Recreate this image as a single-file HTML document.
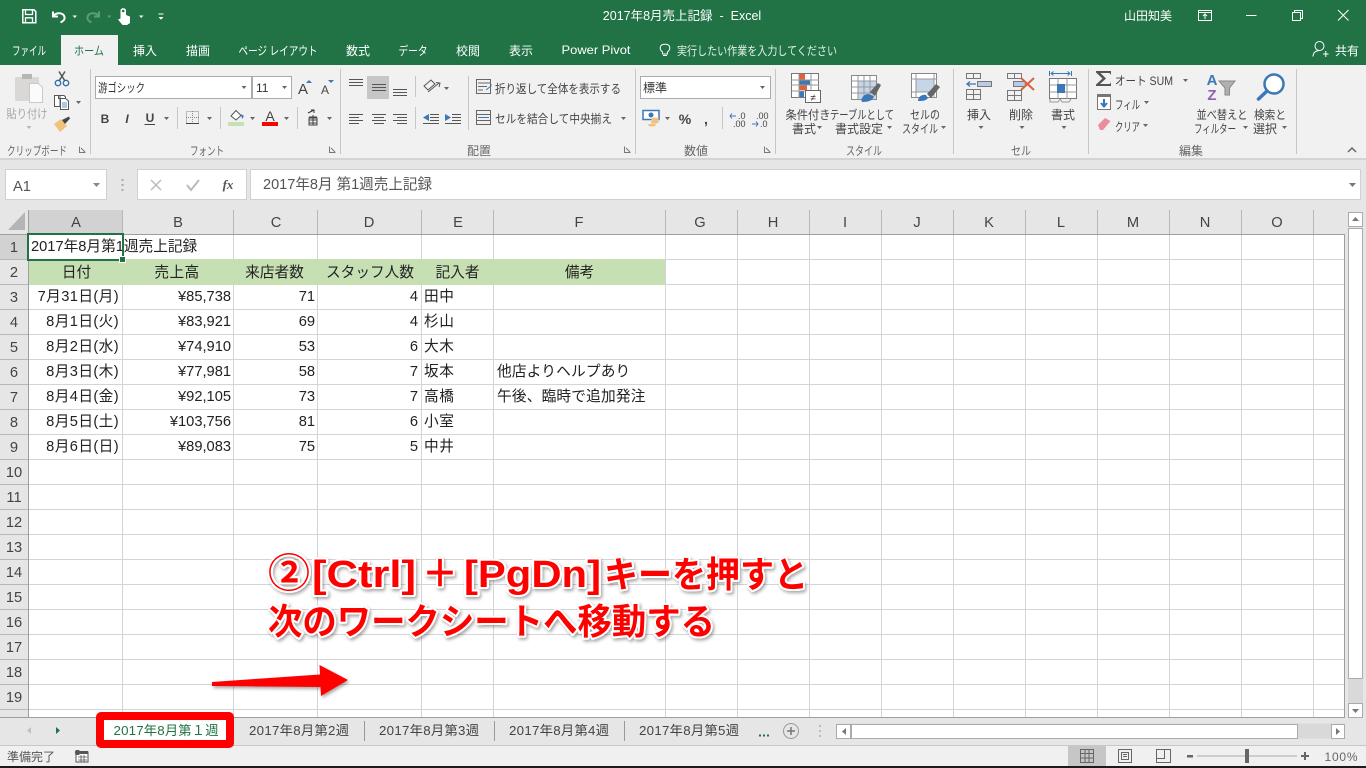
<!DOCTYPE html>
<html lang="ja"><head><meta charset="utf-8"><title>Excel</title>
<style>
html,body{margin:0;padding:0;width:1366px;height:768px;overflow:hidden;background:#fff}
#a{position:relative;width:1366px;height:768px;overflow:hidden;font-family:"Liberation Sans","Noto Sans CJK JP",sans-serif}
svg{position:absolute;left:0;top:0}
.c{position:absolute;height:25px;line-height:24px;font-size:14.67px;color:#222;white-space:nowrap}
.r{text-align:right}.m{text-align:center}
.A{left:28px;width:91px}.B{left:123px;width:108px}.C{left:234px;width:81px}.D{left:318px;width:100px}.E{left:424px;width:68px;letter-spacing:.6px}.F{left:497px;width:168px}
.k{letter-spacing:.4px}
.t{font-family:"Liberation Sans","Noto Sans CJK JP",sans-serif;font-size:12px;fill:#444}
.w{fill:#fff}
.h{font-size:14.67px;fill:#444;text-anchor:middle}
.g{font-size:12px;fill:#666;text-anchor:middle}
.s{font-size:13.3px;fill:#444;text-anchor:middle}
.x{text-anchor:middle}
.ann{font-family:"Liberation Sans","Noto Sans CJK JP",sans-serif;font-weight:700;fill:#f00;stroke:#fff;stroke-width:4px;paint-order:stroke fill;stroke-linejoin:round}
</style></head><body><div id="a">
<svg width="1366" height="768" viewBox="0 0 1366 768">
<defs><filter id="sh" x="-5%" y="-20%" width="110%" height="150%"><feDropShadow dx="1.5" dy="2" stdDeviation="1.5" flood-color="#000" flood-opacity=".35"/></filter></defs>
<!-- base -->
<rect width="1366" height="65" fill="#217346"/>
<rect y="65" width="1366" height="93" fill="#f1f1f1"/>
<rect y="158" width="1366" height="2" fill="#d4d4d4"/>
<rect y="160" width="1366" height="558" fill="#e6e6e6"/>
<rect x="28" y="235" width="1316.5" height="482" fill="#fff"/>
<!-- header highlight -->
<rect x="28" y="210" width="94.5" height="24" fill="#d2d2d2"/>
<rect x="0" y="235" width="28" height="24" fill="#d2d2d2"/>
<path d="M25 212V230H8Z" fill="#b5b5b5"/>
<!-- gridlines -->
<g stroke="#d4d4d4" fill="none">
<path d="M28 284.500H1344.500M28 309.500H1344.500M28 334.500H1344.500M28 359.500H1344.500M28 384.500H1344.500M28 409.500H1344.500M28 434.500H1344.500M28 459.500H1344.500M28 484.500H1344.500M28 509.500H1344.500M28 534.500H1344.500M28 559.500H1344.500M28 584.500H1344.500M28 609.500H1344.500M28 634.500H1344.500M28 659.500H1344.500M28 684.500H1344.500M28 709.500H1344.500M122 259.500H1344.500"/>
<path d="M122.500 235V717M233.500 235V717M317.500 235V717M421.500 235V717M493.500 235V717M665.500 235V717M737.500 235V717M809.500 235V717M881.500 235V717M953.500 235V717M1025.500 235V717M1097.500 235V717M1169.500 235V717M1241.500 235V717M1313.500 235V717"/>
</g>
<rect x="29" y="259" width="636" height="26" fill="#c6e0b4"/>
<!-- row header lines -->
<g stroke="#b8b8b8" fill="none">
<path d="M0 259.500H28M0 284.500H28M0 309.500H28M0 334.500H28M0 359.500H28M0 384.500H28M0 409.500H28M0 434.500H28M0 459.500H28M0 484.500H28M0 509.500H28M0 534.500H28M0 559.500H28M0 584.500H28M0 609.500H28M0 634.500H28M0 659.500H28M0 684.500H28M0 709.500H28"/>
<path d="M122.500 210V234M233.500 210V234M317.500 210V234M421.500 210V234M493.500 210V234M665.500 210V234M737.500 210V234M809.500 210V234M881.500 210V234M953.500 210V234M1025.500 210V234M1097.500 210V234M1169.500 210V234M1241.500 210V234M1313.500 210V234"/>
</g>
<path d="M0 234.500H1344.500M28.500 210V717M1344.500 234V717M0 717.500H1345" stroke="#9e9e9e" fill="none"/>
<!-- header text -->
<text class="h" x="76" y="227">A</text><text class="h" x="178" y="227">B</text><text class="h" x="276" y="227">C</text><text class="h" x="369" y="227">D</text><text class="h" x="458" y="227">E</text><text class="h" x="579" y="227">F</text><text class="h" x="700" y="227">G</text><text class="h" x="773" y="227">H</text><text class="h" x="845" y="227">I</text><text class="h" x="917" y="227">J</text><text class="h" x="989" y="227">K</text><text class="h" x="1061" y="227">L</text><text class="h" x="1133" y="227">M</text><text class="h" x="1205" y="227">N</text><text class="h" x="1277" y="227">O</text>
<text class="h" x="14" y="252">1</text><text class="h" x="14" y="277">2</text><text class="h" x="14" y="302">3</text><text class="h" x="14" y="327">4</text><text class="h" x="14" y="352">5</text><text class="h" x="14" y="377">6</text><text class="h" x="14" y="402">7</text><text class="h" x="14" y="427">8</text><text class="h" x="14" y="452">9</text><text class="h" x="14" y="477">10</text><text class="h" x="14" y="502">11</text><text class="h" x="14" y="527">12</text><text class="h" x="14" y="552">13</text><text class="h" x="14" y="577">14</text><text class="h" x="14" y="602">15</text><text class="h" x="14" y="627">16</text><text class="h" x="14" y="652">17</text><text class="h" x="14" y="677">18</text><text class="h" x="14" y="702">19</text>
<rect x="0" y="710" width="28" height="7" fill="#e6e6e6"/>

<!-- vertical scrollbar -->
<rect x="1348" y="229" width="15" height="474" fill="#d9d9d9"/>
<rect x="1348.500" y="212.500" width="14" height="14" fill="#fff" stroke="#ababab"/>
<path d="M1352 221H1359L1355.500 217Z" fill="#777"/>
<rect x="1348.500" y="228.500" width="14" height="450" fill="#fff" stroke="#ababab"/>
<rect x="1348.500" y="703.500" width="14" height="14" fill="#fff" stroke="#ababab"/>
<path d="M1352 709H1359L1355.500 713Z" fill="#777"/>

<!-- Title bar -->
<g fill="none" stroke="#fff" stroke-width="1.500">
<path d="M22.800 9.800H34L35.800 11.600V22.800H22.800Z"/>
<path d="M25.500 10V14.500H32.500V10" stroke-width="1.300"/>
<path d="M25.500 23V17.800H32.500V23" stroke-width="1.300"/>
<path d="M53 11.500V16.500H58" stroke-width="2"/>
<path d="M53.500 16C56 11.800 63.500 12.500 64.500 17C65 19.500 63 21.500 60.500 22.300" stroke-width="2"/>
</g>
<path d="M72.500 15.500H77L74.750 18Z" fill="#fff"/>
<g fill="none" stroke="#5d9c7b" stroke-width="2"><path d="M99 11.500V16.500H94"/><path d="M98.500 16C96 11.800 88.500 12.500 87.500 17C87 19.500 89 21.500 91.500 22.300"/></g>
<path d="M107 15.500H111.500L109.250 18Z" fill="#5d9c7b"/>
<path d="M120.500 10.500C120.500 7.500 126 7.500 126 10.500V15L130 16.500V23L127 25H122.500L118 19.500L120.500 18.500Z" fill="#fff"/>
<circle cx="123.200" cy="11" r="1.300" fill="#217346"/>
<path d="M139 15.500H143.500L141.250 18Z" fill="#fff"/>
<path d="M158.500 13.500H163.500V14.500H158.500ZM158.500 17H163.500L161 19.700Z" fill="#fff"/>
<text class="t w x" x="682" y="20" style="font-size:12.500px" xml:space="preserve">2017年8月売上記録  -  Excel</text>
<text class="t w x" x="1148" y="20" textLength="48" lengthAdjust="spacingAndGlyphs">山田知美</text>
<g fill="none" stroke="#fff" stroke-width="1">
<path d="M1198.500 10.500H1211.500V20.500H1198.500ZM1198.500 12.500H1211.500M1205 19V14.500M1203 16L1205 14L1207 16"/>
<path d="M1246 15.500H1256.500"/>
<path d="M1292.500 12.500H1300.500V20.500H1292.500ZM1294.500 12V10.500H1302.500V18.500H1301"/>
<path d="M1338 10L1348.500 20.500M1348.500 10L1338 20.500"/>
</g>
<!-- tabs -->
<rect x="61" y="35" width="57" height="31" fill="#f1f1f1"/>
<g style="font-size:12px">
<text class="t w x" x="29" y="55" textLength="34" lengthAdjust="spacingAndGlyphs">ファイル</text>
<text class="t x" x="89" y="55" textLength="30" lengthAdjust="spacingAndGlyphs" style="fill:#217346">ホーム</text>
<text class="t w x" x="145" y="55" textLength="24">挿入</text>
<text class="t w x" x="198" y="55" textLength="24">描画</text>
<text class="t w x" x="278" y="55" textLength="79" lengthAdjust="spacingAndGlyphs">ページ レイアウト</text>
<text class="t w x" x="358" y="55" textLength="24">数式</text>
<text class="t w x" x="413" y="55" textLength="29" lengthAdjust="spacingAndGlyphs">データ</text>
<text class="t w x" x="468" y="55" textLength="24">校閲</text>
<text class="t w x" x="521" y="55" textLength="24">表示</text>
<text class="t w x" x="596" y="54" textLength="69" lengthAdjust="spacingAndGlyphs">Power Pivot</text>
<text class="t" x="677" y="55" textLength="160" lengthAdjust="spacingAndGlyphs" style="fill:#e4efe9">実行したい作業を入力してください</text>
<text class="t w x" x="1347" y="55" textLength="24">共有</text>
</g>
<g fill="none" stroke="#fff" stroke-width="1">
<path d="M662.500 52C660.500 50.500 659.800 48.500 660.500 46.500C661.500 43.500 668.500 43.500 669.500 46.500C670.200 48.500 669.500 50.500 667.500 52V54H662.500ZM663 55.500H667"/>
<circle cx="1319.500" cy="46" r="4.500"/>
<path d="M1313 56.500C1313 52.500 1316 50.500 1319.500 50.500M1323 54H1328.500M1325.800 51V57"/>
</g>

<!-- ribbon separators -->
<path d="M90.500 69V154M340.500 69V154M635.500 69V154M775.500 69V154M953.500 69V154M1088.500 69V154M1296.500 69V154" stroke="#c6c6c6"/>
<path d="M415.500 76V97M415.500 107V129M468.500 76V130M177.500 107V129M220.500 107V129M297.500 107V129M722.500 107V129" stroke="#c6c6c6"/>

<!-- group labels -->
<g>
<text class="g" x="37" y="155" textLength="60" lengthAdjust="spacingAndGlyphs">クリップボード</text>
<text class="g" x="207" y="155" textLength="34" lengthAdjust="spacingAndGlyphs">フォント</text>
<text class="g" x="479" y="155" textLength="24">配置</text>
<text class="g" x="696" y="155" textLength="24">数値</text>
<text class="g" x="864" y="155" textLength="36" lengthAdjust="spacingAndGlyphs">スタイル</text>
<text class="g" x="1021" y="155" textLength="20" lengthAdjust="spacingAndGlyphs">セル</text>
<text class="g" x="1191" y="155" textLength="24">編集</text>
</g>
<g fill="none" stroke="#777" stroke-width="1">
<path d="M79.500 146.500V152.500H85.500M85 152L81 148"/><path d="M329.500 146.500V152.500H335.500M335 152L331 148"/><path d="M624.500 146.500V152.500H630.500M630 152L626 148"/><path d="M764.500 146.500V152.500H770.500M770 152L766 148"/>
</g>

<!-- clipboard -->
<rect x="15" y="77" width="24" height="24" rx="1" fill="#dad7d7"/>
<rect x="22" y="74" width="10" height="5" fill="#b9b5b5"/>
<path d="M29.500 83.500H38.500L42.500 87.500V102.500H29.500Z" fill="#fbfbfb" stroke="#c9c9c9"/>
<text class="t x" x="27" y="118" textLength="41" lengthAdjust="spacingAndGlyphs" style="fill:#a6a6a6">貼り付け</text>
<path d="M26.500 126H31.500L29 129Z" fill="#b5b5b5"/>
<g fill="none"><circle cx="58" cy="83" r="2.700" stroke="#2b6fb5" stroke-width="1.400"/><circle cx="66" cy="83" r="2.700" stroke="#2b6fb5" stroke-width="1.400"/><path d="M59 81L65 71.500M65 81L59 71.500" stroke="#555" stroke-width="1.500"/></g>
<path d="M58.500 95.500H64L65.500 97V98.500H58.500ZM54.500 95.500H60V106.500H54.500Z" fill="#fff" stroke="#555"/>
<path d="M60.500 98.500H65.500L68.500 101V109.500H60.500Z" fill="#fff" stroke="#555"/>
<path d="M62 103H67M62 105H67M62 107H67" stroke="#2b6fb5" stroke-width=".8"/>
<path d="M76 101H81L78.500 104Z" fill="#666"/>
<path d="M54 124L61 119L67 126L60 132Z" fill="#f2c27a"/>
<path d="M62 120L69 116.500L70 118.500L65 124Z" fill="#444"/>

<!-- font -->
<rect x="95.500" y="76.500" width="156" height="22" fill="#fff" stroke="#ababab"/>
<rect x="252.500" y="76.500" width="39" height="22" fill="#fff" stroke="#ababab"/>
<text class="t" x="98" y="92" textLength="47" lengthAdjust="spacingAndGlyphs" style="fill:#333">游ゴシック</text>
<text class="t" x="256" y="92" style="fill:#333">11</text>
<path d="M241.500 86H246.500L244 89ZM282 86H287L284.500 89Z" fill="#666"/>
<text class="t x" x="303" y="94" style="font-size:15px;fill:#444">A</text>
<path d="M306 83H312L309 80Z" fill="#3c78b5"/>
<text class="t x" x="325" y="94" style="font-size:12px;fill:#444">A</text>
<path d="M328 80H334L331 83Z" fill="#3c78b5"/>
<text class="t x" x="105" y="123" style="font-size:12px;font-weight:700;fill:#444">B</text>
<text class="t x" x="127" y="123" style="font-size:12px;font-weight:700;font-style:italic;fill:#444">I</text>
<text class="t x" x="150" y="122" style="font-size:12px;font-weight:700;fill:#444">U</text>
<path d="M144.500 124.500H155" stroke="#444"/>
<path d="M164 117H169L166.500 120ZM207 117H212L209.500 120ZM250 117H255L252.500 120ZM284 117H289L286.500 120ZM327 117H332L329.500 120Z" fill="#666"/>
<rect x="186.500" y="111.500" width="12" height="12" fill="none" stroke="#888" stroke-dasharray="1 1"/>
<path d="M192.500 111V124M186 117.500H199" stroke="#888" stroke-dasharray="1 1"/>
<path d="M186 123.500H199" stroke="#444"/>
<rect x="228" y="122" width="16" height="4" fill="#c6e0b4"/>
<path d="M231 116L236 110.500L241 115.500L236 120Z" fill="#fff" stroke="#555"/>
<path d="M241 114L244 116L242 119Z" fill="#3c78b5"/>
<text class="t x" x="270" y="121" style="font-size:14px;fill:#444">A</text>
<rect x="262" y="122" width="16" height="4" fill="#f00"/>
<path d="M308 113L314 110M311 110H314V113" stroke="#333" fill="none"/>
<path d="M309 117H317M309 120H317M309 123H317M313 115V125" stroke="#444" fill="none"/>
<rect x="309" y="118" width="8" height="7" fill="none" stroke="#444"/>

<!-- alignment -->
<rect x="367" y="76" width="22" height="23" fill="#c6c6c6"/>
<g stroke="#555" fill="none">
<path d="M349 79.500H363M349 82.500H363M349 85.500H363"/>
<path d="M372 84.500H386M372 87.500H386M372 90.500H386"/>
<path d="M393 89.500H407M393 92.500H407M393 95.500H407"/>
<path d="M349 114.500H363M349 117.500H359M349 120.500H363M349 123.500H359"/>
<path d="M372 114.500H386M374 117.500H384M372 120.500H386M374 123.500H384"/>
<path d="M393 114.500H407M397 117.500H407M393 120.500H407M397 123.500H407"/>
<path d="M430 114.500H439M430 117.500H439M430 120.500H439M423 123.500H439M423 114.500"/>
<path d="M452 114.500H461M452 117.500H461M452 120.500H461M445 123.500H461"/>
</g>
<path d="M423 117.500L429 114V116H429V119H429V121Z" fill="#3c78b5"/>
<path d="M451 117.500L445 114V121Z" fill="#3c78b5"/>
<g fill="none" stroke="#555"><path d="M424 86L431 80L435 84L428 90Z"/><path d="M428 92L439 83M436 82.500L440 83L439 87"/></g>
<path d="M444 87H449L446.500 90Z" fill="#666"/>
<g fill="none" stroke="#666"><rect x="476.500" y="79.500" width="14" height="14"/><path d="M478 83H490M478 86.500H487M478 90H483"/></g>
<path d="M486 90L491 86V84" fill="none" stroke="#3c78b5"/>
<text class="t" x="495" y="93" textLength="126" lengthAdjust="spacingAndGlyphs">折り返して全体を表示する</text>
<g fill="none" stroke="#666"><rect x="476.500" y="110.500" width="14" height="14"/><path d="M477 114.500H490M477 120.500H490"/></g>
<path d="M478 117.500H489" stroke="#3c78b5"/>
<text class="t" x="495" y="123" textLength="117" lengthAdjust="spacingAndGlyphs">セルを結合して中央揃え</text>
<path d="M621 117H626L623.500 120Z" fill="#666"/>

<!-- number -->
<rect x="640.500" y="76.500" width="130" height="22" fill="#fff" stroke="#ababab"/>
<text class="t" x="643" y="92" textLength="24" style="fill:#333">標準</text>
<path d="M760 86H765L762.500 89Z" fill="#666"/>
<rect x="643" y="110.500" width="16" height="9" fill="#fff" stroke="#3c78b5" stroke-width="1.500"/>
<circle cx="651" cy="115" r="2.500" fill="#3c78b5"/>
<ellipse cx="655" cy="119" rx="4" ry="1.500" fill="#f2c27a"/><ellipse cx="655" cy="122" rx="4" ry="1.500" fill="#f2c27a"/><ellipse cx="652" cy="125" rx="4" ry="1.500" fill="#f2c27a"/>
<path d="M665 117H670L667.500 120Z" fill="#666"/>
<text class="t x" x="685" y="124" style="font-size:14px;font-weight:700;fill:#444">%</text>
<text class="t x" x="706" y="124" style="font-size:14px;font-weight:700;fill:#444">,</text>
<text class="t" x="738" y="119" style="font-size:9px;fill:#444">.0</text>
<text class="t" x="733" y="127" style="font-size:9px;fill:#444">.00</text>
<path d="M730 116H736M732 113.500L730 116L732 118.500" stroke="#3c78b5" fill="none"/>
<text class="t" x="756" y="119" style="font-size:9px;fill:#444">.00</text>
<text class="t" x="760" y="127" style="font-size:9px;fill:#444">.0</text>
<path d="M752 124H758M756 121.500L758 124L756 126.500" stroke="#3c78b5" fill="none"/>

<!-- styles -->
<rect x="791.500" y="73.500" width="27" height="24" fill="#fff" stroke="#777"/>
<rect x="799" y="74" width="6" height="6" fill="#e0623c"/><rect x="799" y="80" width="11" height="5" fill="#3c78b5"/><rect x="799" y="85" width="8" height="5" fill="#e0623c"/><rect x="799" y="91" width="5" height="6" fill="#3c78b5"/>
<path d="M791.500 80H819M791.500 85H819M791.500 91H819M799 74V98M811 74V98" stroke="#999" fill="none"/>
<rect x="805.500" y="90.500" width="15" height="12" fill="#fff" stroke="#666"/>
<text class="t x" x="813" y="101" style="font-size:10px;fill:#333">≠</text>
<text class="t x" x="808" y="119" textLength="45" lengthAdjust="spacingAndGlyphs">条件付き</text>
<text class="t x" x="804" y="133" textLength="24">書式</text>
<path d="M817 126H822L819.500 129Z" fill="#666"/>
<rect x="851.500" y="75.500" width="25" height="24" fill="#fff" stroke="#888"/>
<rect x="858" y="81" width="18" height="18" fill="#c5d6e8"/>
<path d="M851.500 81H877M851.500 87H877M851.500 93H877M858 76V100M864 76V100M870 76V100" stroke="#999" fill="none"/>
<path d="M862 102C860 99 864 94 868 94L874 96C873 100 870 102 862 102Z" fill="#3c78b5"/>
<path d="M870 92L878 83L881 85L875 96Z" fill="#666"/>
<text class="t x" x="862" y="119" textLength="64" lengthAdjust="spacingAndGlyphs">テーブルとして</text>
<text class="t x" x="859" y="133" textLength="48">書式設定</text>
<path d="M887 126H892L889.500 129Z" fill="#666"/>
<rect x="911.500" y="73.500" width="25" height="24" fill="#fff" stroke="#888"/>
<rect x="916" y="79" width="18" height="13" fill="#c5d6e8"/>
<path d="M911.500 79H937M911.500 92H937M916 74V98M934 74V98" stroke="#999" fill="none"/>
<path d="M918 101C918 97 922 94 926 95L928 98C926 101 922 101 918 101Z" fill="#3c78b5"/>
<path d="M927 94L936 84L940 87L931 98Z" fill="#666"/>
<text class="t x" x="925" y="119" textLength="30" lengthAdjust="spacingAndGlyphs">セルの</text>
<text class="t x" x="920" y="133" textLength="36" lengthAdjust="spacingAndGlyphs">スタイル</text>
<path d="M941 126H946L943.500 129Z" fill="#666"/>

<!-- cells -->
<g fill="none" stroke="#777">
<path d="M966.500 73.500H980.500V78.500H966.500ZM973.500 73.500V78.500"/>
<path d="M966.500 89.500H980.500V99.500H966.500ZM966.500 94.500H980.500M973.500 89.500V99.500"/>
<path d="M977.500 81.500H991.500V86.500H977.500ZM984.500 81.500V86.500"/>
<path d="M1007.500 73.500H1021.500V78.500H1007.500ZM1014.500 73.500V78.500"/>
<path d="M1007.500 90.500H1021.500V100.500H1007.500ZM1007.500 95.500H1021.500M1014.500 90.500V100.500"/>
<path d="M1013.500 81.500H1025V86.500H1013.500Z"/>
</g>
<rect x="978" y="82" width="13" height="4" fill="#b8cce4"/><rect x="1014" y="82" width="10" height="4" fill="#b8cce4"/>
<path d="M967 84H976M970 81.500L967 84L970 86.500" stroke="#3c78b5" stroke-width="1.300" fill="none"/>
<path d="M1021 78L1034 90M1034 78L1021 90" stroke="#d9603b" stroke-width="2"/>
<path d="M1049.500 71V76M1071.500 71V76M1051 73.500H1070M1053.500 71.500L1051 73.500L1053.500 75.500M1067.500 71.500L1070 73.500L1067.500 75.500" stroke="#3c78b5" fill="none"/>
<rect x="1049.500" y="78.500" width="27" height="20" fill="#fff" stroke="#777"/>
<path d="M1049.500 85H1077M1049.500 92H1077M1058 78.500V99M1067 78.500V99" stroke="#999" fill="none"/>
<rect x="1057" y="84" width="8" height="9" fill="#3c78b5"/>
<path d="M1050 99V102L1058 102L1060 99M1060 99L1062 102H1069L1071 99" stroke="#999" fill="none"/>
<text class="t x" x="979" y="119" textLength="24">挿入</text>
<text class="t x" x="1021" y="119" textLength="24">削除</text>
<text class="t x" x="1063" y="119" textLength="24">書式</text>
<path d="M978.500 126H983.500L981 129ZM1019.500 126H1024.500L1022 129ZM1061.500 126H1066.500L1064 129Z" fill="#666"/>

<!-- editing -->
<path d="M1096 71H1111V75L1109.500 73H1100.500L1106 78.500L1100 84H1110L1111 82V86H1096V84.500L1102.500 78.500L1096 72.500Z" fill="#555"/>
<text class="t" x="1115" y="85" textLength="58" lengthAdjust="spacingAndGlyphs">オート SUM</text>
<path d="M1183 79H1188L1185.500 82ZM1144 101H1149L1146.500 104ZM1143 124H1148L1145.500 127ZM1243 126H1248L1245.500 129ZM1282 126H1287L1284.500 129Z" fill="#666"/>
<rect x="1097.500" y="94.500" width="13" height="15" fill="#fff" stroke="#777"/>
<rect x="1097" y="94" width="14" height="3" fill="#777"/>
<path d="M1104 99V106M1101 103L1104 106.500L1107 103" stroke="#3c78b5" stroke-width="2" fill="none"/>
<text class="t" x="1115" y="109" textLength="25" lengthAdjust="spacingAndGlyphs">フィル</text>
<path d="M1098 125L1105 118L1110.500 121L1103 130H1100Z" fill="#ec8d9d"/>
<text class="t" x="1115" y="131" textLength="25" lengthAdjust="spacingAndGlyphs">クリア</text>
<text class="t x" x="1212" y="85" style="font-size:15px;font-weight:700;fill:#3c78b5">A</text>
<text class="t x" x="1212" y="100" style="font-size:15px;font-weight:700;fill:#9060b0">Z</text>
<path d="M1219 81H1235L1229.500 88V95L1225 95V88Z" fill="#b0b0b0" stroke="#888"/>
<text class="t x" x="1222" y="119" textLength="51" lengthAdjust="spacingAndGlyphs">並べ替えと</text>
<text class="t x" x="1215" y="133" textLength="42" lengthAdjust="spacingAndGlyphs">フィルター</text>
<circle cx="1274" cy="84" r="9.500" fill="#fff" stroke="#3c78b5" stroke-width="2.500"/>
<path d="M1267 91L1258.500 99" stroke="#3c78b5" stroke-width="3.500" stroke-linecap="round"/>
<text class="t x" x="1270" y="119" textLength="32" lengthAdjust="spacingAndGlyphs">検索と</text>
<text class="t x" x="1265" y="133" textLength="24">選択</text>
<path d="M1348 152L1352 148L1356 152" stroke="#666" stroke-width="1.500" fill="none"/>

<!-- formula bar -->
<rect x="5.500" y="169.500" width="101" height="30" fill="#fff" stroke="#d0d0d0"/>
<text class="t" x="13" y="191" style="font-size:14.670px;fill:#555">A1</text>
<path d="M93 183H100L96.500 187Z" fill="#888"/>
<path d="M122.500 179V181M122.500 184V186M122.500 189V191" stroke="#aaa" stroke-width="2"/>
<rect x="137.500" y="169.500" width="109" height="30" fill="#fff" stroke="#d0d0d0"/>
<rect x="250.500" y="169.500" width="1110" height="30" fill="#fff" stroke="#d0d0d0"/>
<path d="M151 180L161 190M161 180L151 190" stroke="#bbb" stroke-width="1.500"/>
<path d="M187 185L191 190L199 180" stroke="#bbb" stroke-width="2" fill="none"/>
<text x="228" y="189" class="x" style="font-family:'Liberation Serif',serif;font-size:13px;font-style:italic;font-weight:700;fill:#555">fx</text>
<text class="t" x="263" y="189" textLength="169" lengthAdjust="spacingAndGlyphs" style="font-size:14.670px;fill:#555">2017年8月 第1週売上記録</text>
<path d="M1349 183H1356L1352.500 187Z" fill="#777"/>

<!-- sheet tabs -->
<rect x="0" y="718" width="1366" height="27" fill="#e6e6e6"/>
<rect x="0" y="745" width="1366" height="1" fill="#c8c8c8"/>
<rect x="0" y="746" width="1366" height="20" fill="#f0f0f0"/>
<rect x="0" y="766" width="1366" height="2" fill="#1b1b1b"/>
<rect x="1068" y="746" width="38" height="20" fill="#c6c6c6"/>
<path d="M31 727V734L27 730.500Z" fill="#c0c0c0"/>
<path d="M56 727V734L60 730.500Z" fill="#217346"/>
<text class="s" x="299" y="735" textLength="100">2017年8月第2週</text>
<text class="s" x="429" y="735" textLength="100">2017年8月第3週</text>
<text class="s" x="559" y="735" textLength="100">2017年8月第4週</text>
<text class="s" x="689" y="735" textLength="100">2017年8月第5週</text>
<path d="M364.500 721V741M494.500 721V741M624.500 721V741" stroke="#999"/>
<path d="M759 735.500H761M763 735.500H765M767 735.500H769" stroke="#217346" stroke-width="2"/>
<circle cx="791" cy="731" r="7.500" fill="none" stroke="#999"/>
<path d="M787 731H795M791 727V735" stroke="#777" stroke-width="1.500"/>
<path d="M820 725V727M820 730V732M820 735V737" stroke="#bbb" stroke-width="2"/>
<rect x="836.500" y="723.500" width="508" height="15" fill="#d9d9d9" stroke="none"/>
<rect x="836.500" y="724.500" width="14" height="14" fill="#fff" stroke="#ababab"/>
<path d="M846 728V735L842 731.500Z" fill="#777"/>
<rect x="851.500" y="724.500" width="446" height="14" fill="#fff" stroke="#ababab"/>
<rect x="1331.500" y="724.500" width="13" height="14" fill="#fff" stroke="#ababab"/>
<path d="M1336 728V735L1340 731.500Z" fill="#777"/>

<!-- status bar -->
<text class="t" x="7" y="761" textLength="48" style="fill:#555">準備完了</text>
<rect x="76" y="752" width="12" height="10" fill="#fff" stroke="#555"/>
<rect x="75" y="750" width="5" height="5" rx="2" fill="#555"/><rect x="80" y="751" width="8" height="3" fill="#555"/>
<path d="M78 757H87M78 760H87M81 755V762M84 755V762" stroke="#555" fill="none" stroke-width=".8"/>
<g fill="none" stroke="#666">
<path d="M1080.500 749.500H1093.500V762.500H1080.500ZM1080.500 753.500H1093.500M1080.500 758H1093.500M1085 749.500V762.500M1089 749.500V762.500"/>
<path d="M1118.500 749.500H1131.500V762.500H1118.500ZM1121.500 752.500H1128.500V759.500H1121.500ZM1123 754.500H1127M1123 756.500H1127"/>
<path d="M1156.500 749.500H1170.500V762.500H1156.500ZM1156.500 758.500H1164.500V749.500"/>
</g>
<rect x="1187" y="755" width="6" height="2.500" fill="#666"/>
<path d="M1197 756H1297" stroke="#aaa"/>
<rect x="1245" y="749" width="4" height="14" fill="#666"/>
<path d="M1301 756H1309M1305 752V760" stroke="#666" stroke-width="2"/>
<text class="t x" x="1341" y="761" textLength="33" style="fill:#666">100%</text>
</svg>

<!-- cells -->
<div class="c" style="left:31px;top:235px">2017年8月第1週売上記録</div>
<div class="c m" style="left:31px;width:91px;top:261px">日付</div><div class="c m k B" style="top:261px">売上高</div><div class="c m C" style="top:261px">来店者数</div><div class="c m D" style="top:261px;left:320px">スタッフ人数</div><div class="c m" style="left:422px;width:71px;top:261px">記入者</div><div class="c m" style="left:494px;width:171px;top:261px">備考</div>
<div class="c r k A" style="top:285px">7月31日(月)</div><div class="c r B" style="top:285px">¥85,738</div><div class="c r C" style="top:285px">71</div><div class="c r D" style="top:285px">4</div><div class="c E" style="top:285px">田中</div>
<div class="c r k A" style="top:310px">8月1日(火)</div><div class="c r B" style="top:310px">¥83,921</div><div class="c r C" style="top:310px">69</div><div class="c r D" style="top:310px">4</div><div class="c E" style="top:310px">杉山</div>
<div class="c r k A" style="top:335px">8月2日(水)</div><div class="c r B" style="top:335px">¥74,910</div><div class="c r C" style="top:335px">53</div><div class="c r D" style="top:335px">6</div><div class="c E" style="top:335px">大木</div>
<div class="c r k A" style="top:360px">8月3日(木)</div><div class="c r B" style="top:360px">¥77,981</div><div class="c r C" style="top:360px">58</div><div class="c r D" style="top:360px">7</div><div class="c E" style="top:360px">坂本</div><div class="c F" style="top:360px;letter-spacing:.2px">他店よりヘルプあり</div>
<div class="c r k A" style="top:385px">8月4日(金)</div><div class="c r B" style="top:385px">¥92,105</div><div class="c r C" style="top:385px">73</div><div class="c r D" style="top:385px">7</div><div class="c E" style="top:385px">高橋</div><div class="c F" style="top:385px;letter-spacing:.2px">午後、臨時で追加発注</div>
<div class="c r k A" style="top:410px">8月5日(土)</div><div class="c r B" style="top:410px">¥103,756</div><div class="c r C" style="top:410px">81</div><div class="c r D" style="top:410px">6</div><div class="c E" style="top:410px">小室</div>
<div class="c r k A" style="top:435px">8月6日(日)</div><div class="c r B" style="top:435px">¥89,083</div><div class="c r C" style="top:435px">75</div><div class="c r D" style="top:435px">5</div><div class="c E" style="top:435px">中井</div>

<svg width="1366" height="768" viewBox="0 0 1366 768">
<!-- selection -->
<rect x="28" y="234" width="95" height="26" fill="none" stroke="#217346" stroke-width="2"/>
<rect x="119.500" y="256.500" width="6" height="6" fill="#217346" stroke="#fff"/>
<!-- annotation -->
<g filter="url(#sh)">
<text class="ann" x="268" y="587" style="font-size:40px" textLength="42" lengthAdjust="spacingAndGlyphs">②</text>
<text class="ann" x="312" y="587" style="font-size:38px" textLength="104" lengthAdjust="spacingAndGlyphs">[Ctrl]</text>
<text class="ann" x="422" y="587" style="font-size:38px" textLength="36" lengthAdjust="spacingAndGlyphs">＋</text>
<text class="ann" x="464" y="587" style="font-size:38px" textLength="137" lengthAdjust="spacingAndGlyphs">[PgDn]</text>
<text class="ann" x="604" y="587" style="font-size:36px" textLength="204" lengthAdjust="spacingAndGlyphs">キーを押すと</text>
<text class="ann" x="268" y="634" style="font-size:36px" textLength="447" lengthAdjust="spacingAndGlyphs">次のワークシートへ移動する</text>
<path d="M212 682L320 674.500L319.500 665L348 680L321 696L320.500 687L212 686Z" fill="#f00"/>
</g>
<!-- red tab highlight -->
<rect x="100" y="716" width="130" height="28" rx="1" fill="#fff" stroke="#f00" stroke-width="8" stroke-linejoin="round"/>
<text x="166" y="735" class="x" textLength="105" style="font-family:'Liberation Sans','Noto Sans CJK JP',sans-serif;font-size:13.300px;fill:#217346">2017年8月第１週</text>
</svg>
</div></body></html>
